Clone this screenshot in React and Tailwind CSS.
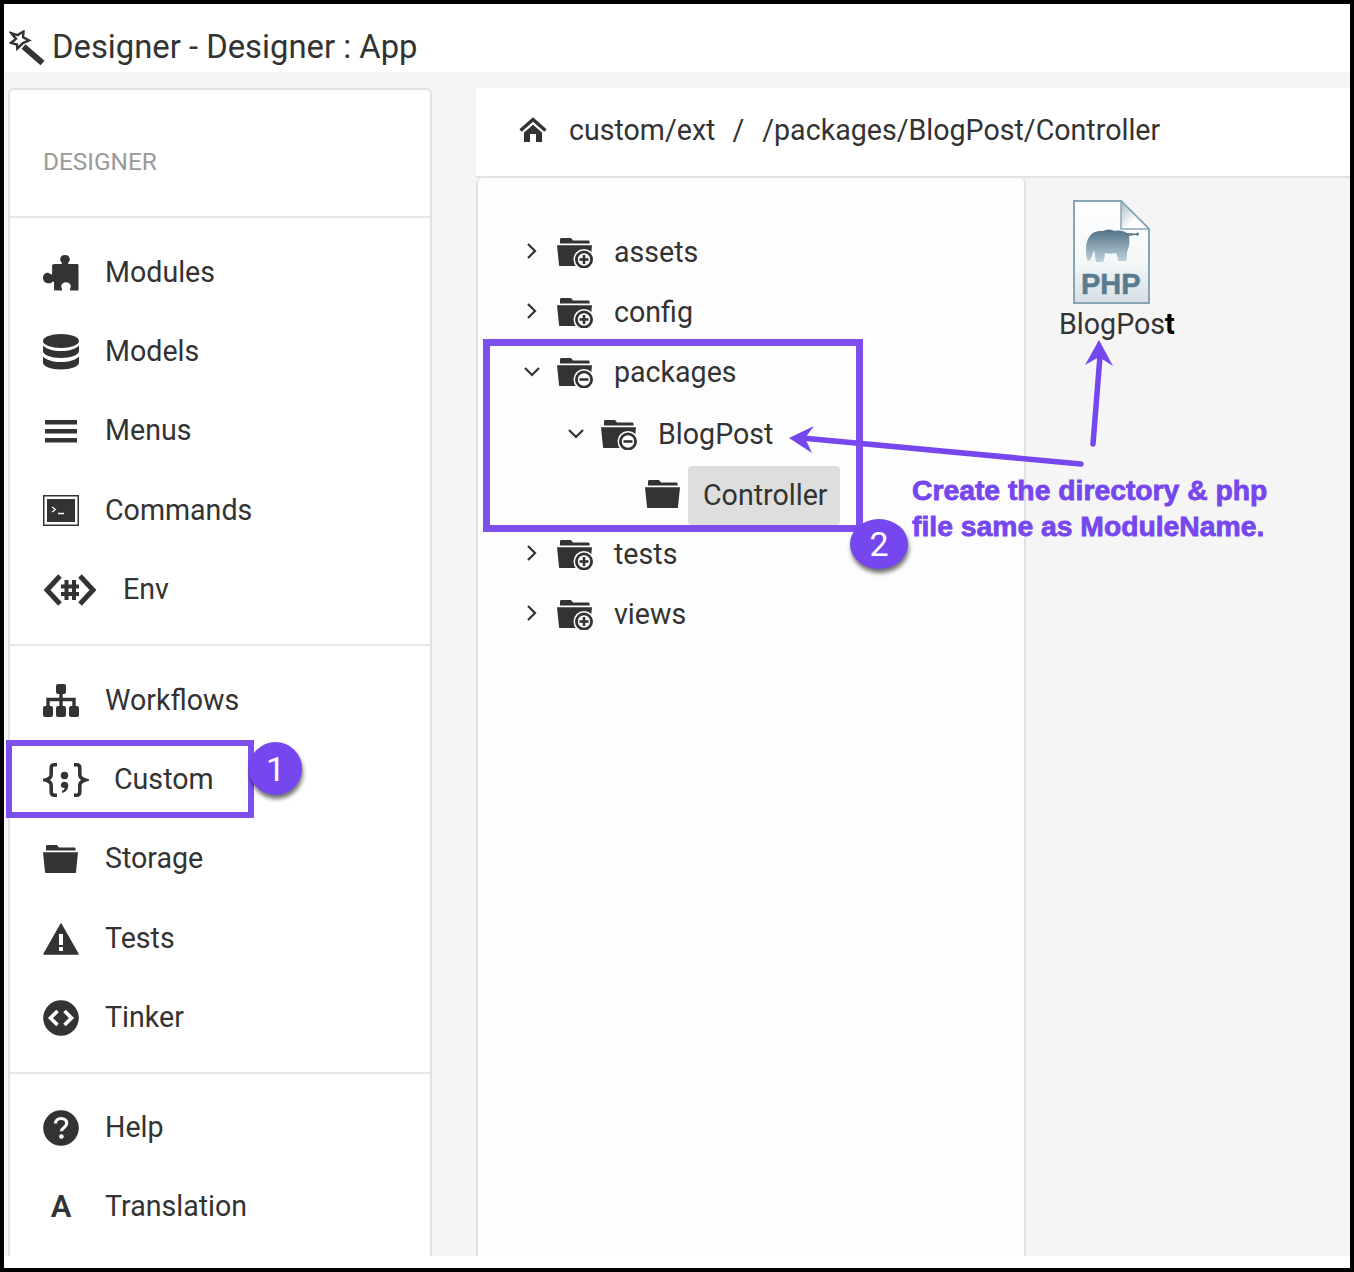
const folderTop = 'M3 6.5V2.6C3 1.500 3.600 1 4.600 1H14l2 2.400h15c1 0 1.600.5 1.600 1.500v1.600z';
const folderBody = 'M0 8.300h35l-2 19.600c-.1.800-.5 1.200-1.200 1.200H3.200c-.7 0-1.100-.4-1.200-1.200z';

function Folder({ badge }) {
  return (
    <svg width="36" height="31" viewBox="0 0 36 31" className="shrink-0" fill="#333">
      <path d={folderTop} />
      <path d={folderBody} />
      {badge && (
        <>
          <circle cx="27" cy="22.500" r="10.500" fill="#fdfdfd" />
          <circle cx="27" cy="22.500" r="7.600" fill="#fdfdfd" stroke="#333" strokeWidth="2.800" />
          <path d="M22.500 22.500h9" stroke="#333" strokeWidth="2.600" />
          {badge === 'plus' && <path d="M27 18v9" stroke="#333" strokeWidth="2.600" />}
        </>
      )}
    </svg>
  );
}

function Chevron({ open }) {
  return open ? (
    <svg width="18" height="12" viewBox="0 0 18 12" fill="none" stroke="#333" strokeWidth="2.200" className="shrink-0">
      <path d="M2 2l7 7 7-7" />
    </svg>
  ) : (
    <svg width="12" height="18" viewBox="0 0 12 18" fill="none" stroke="#333" strokeWidth="2.200" className="shrink-0 -mt-[3px]">
      <path d="M2 2l7 7-7 7" />
    </svg>
  );
}

function PuzzleIcon() {
  return (
    <svg width="36" height="36" viewBox="0 0 36 36" fill="#333">
      <path d="M12 9h6c1 0 1.200-.8.600-1.600-.8-1-1.400-1.800-1.400-3.200C17.200 1.600 19.200 0 22 0s4.800 1.600 4.800 4.200c0 1.400-.6 2.200-1.400 3.200-.6.800-.4 1.600.6 1.600h8c1 0 1.500.6 1.500 1.500V34c0 1-.5 1.500-1.500 1.500h-6c-1 0-1.400-.7-1-1.500.5-1 .8-1.700.8-2.700 0-2.400-2-4.100-4.800-4.100s-4.800 1.700-4.800 4.100c0 1 .3 1.700.8 2.700.4.800 0 1.500-1 1.500h-5.500c-1 0-1.500-.5-1.500-1.500v-6.500c0-1-.8-1.200-1.600-.6-1 .8-1.800 1.400-3.200 1.400C2 28.300 0 26 0 23s2-5.300 4.300-5.300c1.400 0 2.200.6 3.200 1.400.8.600 1.600.4 1.600-.6v-8C9.100 9.500 10.500 9 12 9z" />
    </svg>
  );
}

function DatabaseIcon() {
  return (
    <svg width="36" height="36" viewBox="0 0 36 36" fill="#333">
      <ellipse cx="18" cy="7" rx="18" ry="7" />
      <path d="M0 11.500C3 15 10 17 18 17s15-2 18-5.500V17c0 4-8 7-18 7S0 21 0 17z" />
      <path d="M0 22.500C3 26 10 28 18 28s15-2 18-5.500v6c0 4-8 7-18 7s-18-3-18-7z" />
    </svg>
  );
}

function BarsIcon() {
  return (
    <svg width="36" height="30" viewBox="0 0 36 30" fill="#333">
      <rect x="2" y="4" width="32" height="4.500" />
      <rect x="2" y="13" width="32" height="4.500" />
      <rect x="2" y="22" width="32" height="4.500" />
    </svg>
  );
}

function TerminalIcon() {
  return (
    <svg width="36" height="32" viewBox="0 0 36 32">
      <rect width="36" height="31" fill="#333" />
      <rect x="1.500" y="1.500" width="33" height="28" fill="#fff" />
      <rect x="4" y="4" width="28" height="23" fill="#333" />
      <path d="M9 12l3.500 2.500L9 17" fill="none" stroke="#fff" strokeWidth="1.200" />
      <path d="M15 18.500h6" stroke="#fff" strokeWidth="1.500" />
    </svg>
  );
}

function EnvIcon() {
  return (
    <svg width="54" height="34" viewBox="0 0 54 34" fill="none" stroke="#333">
      <path d="M17 3L4 17l13 14" strokeWidth="5" />
      <path d="M37 3l13 14-13 14" strokeWidth="5" />
      <path d="M23.500 7v20M31 7v20M18 13.500h18M18 21h18" strokeWidth="4" />
    </svg>
  );
}

function SitemapIcon() {
  return (
    <svg width="36" height="34" viewBox="0 0 36 34" fill="#333">
      <rect x="13" y="0" width="10" height="10" rx="2" />
      <rect x="0" y="22" width="10" height="11" rx="2" />
      <rect x="13" y="22" width="10" height="11" rx="2" />
      <rect x="26" y="22" width="10" height="11" rx="2" />
      <path d="M18 9v15M5 24v-8.500h26V24" fill="none" stroke="#333" strokeWidth="3.400" />
    </svg>
  );
}

function BracesIcon() {
  return (
    <svg width="46" height="34" viewBox="0 0 46 34" fill="none" stroke="#333" strokeWidth="3.600">
      <path d="M14 1.800h-2.500c-2.200 0-3.300 1-3.300 3.200v6.500c0 2.800-1.800 4.500-5.500 5.500 3.700 1 5.500 2.700 5.500 5.500V29c0 2.200 1.100 3.200 3.300 3.200H14" />
      <path d="M31 1.800h2.500c2.200 0 3.300 1 3.300 3.200v6.500c0 2.800 1.800 4.500 5.500 5.500-3.700 1-5.500 2.700-5.500 5.500V29c0 2.200-1.100 3.200-3.300 3.200H31" />
      <circle cx="21.500" cy="12.500" r="3.700" fill="#333" stroke="none" />
      <path d="M17.800 22.500c0-2.200 1.500-3.700 3.700-3.700 2.300 0 3.800 1.600 3.800 4 0 3-2 5.800-5.500 7.200l-1-1.700c1.700-.9 2.600-2 2.900-3.300-2.300 0-3.900-.8-3.900-2.500z" fill="#333" stroke="none" />
    </svg>
  );
}

function WarnIcon() {
  return (
    <svg width="36" height="32" viewBox="0 0 36 32">
      <path d="M18 1L35 31H1z" fill="#333" stroke="#333" strokeWidth="1.500" strokeLinejoin="round" />
      <rect x="16" y="11" width="4" height="11" fill="#fff" />
      <rect x="16" y="24" width="4" height="4" fill="#fff" />
    </svg>
  );
}

function CodeCircleIcon() {
  return (
    <svg width="36" height="36" viewBox="0 0 36 36">
      <circle cx="18" cy="18" r="17.800" fill="#333" />
      <path d="M14.500 11l-7 7 7 7M21.500 11l7 7-7 7" fill="none" stroke="#fff" strokeWidth="3.600" />
    </svg>
  );
}

function HelpIcon() {
  return (
    <svg width="36" height="36" viewBox="0 0 36 36">
      <circle cx="18" cy="18" r="17.800" fill="#333" />
      <path d="M12.500 13.500c0-3 2.300-5 5.500-5s5.700 2 5.700 4.800c0 4.300-5.200 4-5.200 8" fill="none" stroke="#fff" strokeWidth="3.200" />
      <circle cx="18.400" cy="26.500" r="2.300" fill="#fff" />
    </svg>
  );
}

function WandIcon() {
  return (
    <svg width="36" height="36" viewBox="0 0 36 36" fill="none" stroke="#333" className="shrink-0">
      <path d="M14.500 1.500l-.4 5.700 6 3.200-6.200 2.700-5.600 5.400-.3-4-6-1.700 5-3.900L2.300 3.200l6.300 1.900z" strokeWidth="2.400" />
      <path d="M14.500 16.500l19 16.500" strokeWidth="6" />
    </svg>
  );
}

function HomeIcon() {
  return (
    <svg width="28" height="26" viewBox="0 0 28 26" fill="#333" className="shrink-0">
      <path d="M1.500 13.500L14 2.500l12.500 11" fill="none" stroke="#333" strokeWidth="3.400" />
      <path d="M5 15.500L14 7.700l9 7.800V25h-6v-8h-6v8H5z" />
    </svg>
  );
}

function PhpFile() {
  return (
    <svg width="79" height="105" viewBox="0 0 79 105" className="ml-[13px]">
      <defs>
        <linearGradient id="page" x1="0" y1="0" x2="0" y2="1">
          <stop offset="0" stopColor="#ffffff" />
          <stop offset="0.6" stopColor="#f4f7f8" />
          <stop offset="1" stopColor="#d5dfe4" />
        </linearGradient>
        <linearGradient id="corner" x1="0" y1="0" x2="1" y2="1">
          <stop offset="0" stopColor="#a9bac3" />
          <stop offset="0.6" stopColor="#ffffff" />
        </linearGradient>
        <linearGradient id="ele" x1="0" y1="0" x2="0" y2="1">
          <stop offset="0" stopColor="#4f7186" />
          <stop offset="1" stopColor="#bfd3dd" />
        </linearGradient>
      </defs>
      <path d="M2 1h47l28 28v74H2z" fill="url(#page)" stroke="#86a6b6" strokeWidth="2" />
      <path d="M49 1v28h28z" fill="url(#corner)" stroke="#86a6b6" strokeWidth="1.500" />
      <path
        d="M15 60C13 50 14 40 18 36 21 31 27 31 31 31 35 29 39 29 43 31 47 30 52 31 55 33L64 33.500C65 32 67 32 67 34 67 36 65 36 64 35L57 36C58 42 57 48 55 52 55 56 55 59 54 61L46 61C46 57 45 55 44 53 40 54 36 54 33 53 33 56 32 60 31 62L24 62C23 57 23 53 22 50 21 54 19 58 18 61Z"
        fill="url(#ele)"
      />
      <text x="9" y="94" fontFamily="Liberation Sans" fontWeight="700" fontSize="29" fill="#587b8f" stroke="#587b8f" strokeWidth="0.500">PHP</text>
    </svg>
  );
}

function NavItem({ icon, label, textOffset = 'w-[62px]' }) {
  return (
    <div className="flex items-center h-[79.3px] pl-[33px]">
      <div className={`${textOffset} shrink-0 flex items-center`}>{icon}</div>
      <span className="-mt-px">{label}</span>
    </div>
  );
}

function TreeRow({ indent, chevron, badge, label, selected }) {
  return (
    <div className={`flex items-center h-[60px] ${indent}`}>
      <div className="w-[39px] shrink-0 flex justify-center pr-[11px]">
        {chevron === 'open' && <Chevron open />}
        {chevron === 'closed' && <Chevron />}
      </div>
      <Folder badge={badge} />
      {selected ? (
        <span className="ml-[7px] px-[15px] h-[59px] -mb-px self-end w-[152px] flex items-center bg-[#dedede] rounded-[4px]">{label}</span>
      ) : (
        <span className="ml-[21px]">{label}</span>
      )}
    </div>
  );
}

export default function App() {
  return (
    <div className="relative w-[1354px] h-[1272px] border-4 border-black bg-white text-[#333] text-[28.6px] leading-none font-['Roboto',sans-serif] overflow-hidden">
      {/* Title */}
      <div className="h-[68px] flex items-center pl-[5px] pt-[19px] text-[32.8px] gap-[7px]">
        <WandIcon />
        <span>Designer - Designer : App</span>
      </div>

      <div className="flex h-[1184px] bg-[#f5f5f5] overflow-hidden">
        {/* Sidebar */}
        <aside className="ml-[4px] mt-[16px] w-[424px] h-[1200px] shrink-0 bg-white border-2 border-[#e2e2e2] rounded-t-[6px]">
          <div className="h-[128px] border-b-2 border-[#e6e6e6] pl-[33px] pt-[60px] text-[24.4px] text-[#999]">DESIGNER</div>
          <div className="h-[428px] border-b-2 border-[#e6e6e6] pt-[15px]">
            <NavItem icon={<PuzzleIcon />} label="Modules" />
            <NavItem icon={<DatabaseIcon />} label="Models" />
            <NavItem icon={<BarsIcon />} label="Menus" />
            <NavItem icon={<TerminalIcon />} label="Commands" />
            <NavItem icon={<EnvIcon />} label="Env" textOffset="w-[80px]" />
          </div>
          <div className="h-[428px] border-b-2 border-[#e6e6e6] pt-[15px]">
            <NavItem icon={<SitemapIcon />} label="Workflows" />
            <NavItem icon={<BracesIcon />} label="Custom" textOffset="w-[71px]" />
            <NavItem icon={<Folder />} label="Storage" />
            <NavItem icon={<WarnIcon />} label="Tests" />
            <NavItem icon={<CodeCircleIcon />} label="Tinker" />
          </div>
          <div className="pt-[14px]">
            <NavItem icon={<HelpIcon />} label="Help" />
            <NavItem
              icon={<span className="w-[36px] text-center font-semibold text-[31px]">A</span>}
              label="Translation"
            />
          </div>
        </aside>

        {/* Main */}
        <main className="ml-[44px] mt-[16px] flex-1 flex flex-col min-w-0">
          <div className="h-[90px] shrink-0 bg-white border-b-2 border-[#e2e2e2] flex items-center pl-[43px] pb-[4px]">
            <HomeIcon />
            <span className="ml-[22px]">custom/ext</span>
            <span className="ml-[17px]">/</span>
            <span className="ml-[18px]">/packages/BlogPost/Controller</span>
          </div>
          <div className="flex flex-1 min-h-0">
            <div className="w-[550px] shrink-0 bg-[#fdfdfd] border-2 border-y-0 border-[#e2e2e2] rounded-t-[6px] pt-[44px]">
              <TreeRow indent="pl-[40px]" chevron="closed" badge="plus" label="assets" />
              <TreeRow indent="pl-[40px]" chevron="closed" badge="plus" label="config" />
              <TreeRow indent="pl-[40px]" chevron="open" badge="minus" label="packages" />
              <TreeRow indent="pl-[84px] mt-[2px]" chevron="open" badge="minus" label="BlogPost" />
              <TreeRow indent="pl-[128px]" label="Controller" selected />
              <TreeRow indent="pl-[40px]" chevron="closed" badge="plus" label="tests" />
              <TreeRow indent="pl-[40px]" chevron="closed" badge="plus" label="views" />
            </div>
            <div className="pl-[33px] pt-[22px]">
              <PhpFile />
              <div className="mt-[5px] whitespace-nowrap">
                BlogPos<span className="font-bold text-black">t</span>
              </div>
            </div>
          </div>
        </main>
      </div>

      {/* Annotations */}
      <div className="absolute left-[2px] top-[736px] w-[248px] h-[78px] border-[6px] border-[#7d50ee]" />
      <div className="absolute left-[479px] top-[335px] w-[380px] h-[193px] border-[7px] border-[#7d50ee]" />
      <div className="absolute left-[245px] top-[738px] w-[53px] h-[53px] rounded-full bg-[#7646ee] text-white text-[34px] flex items-center justify-center shadow-[1px_4px_4px_rgba(0,0,0,0.55)]">1</div>
      <div className="absolute left-[846px] top-[515px] w-[58px] h-[50px] rounded-[50%] bg-[#7646ee] text-white text-[34px] flex items-center justify-center shadow-[1px_4px_4px_rgba(0,0,0,0.55)]">2</div>
      <svg className="absolute -left-[4px] -top-[4px] pointer-events-none" width="1354" height="1272" fill="#7646ee">
        <path d="M1081 464L802 438" stroke="#7646ee" strokeWidth="5.500" strokeLinecap="round" />
        <path d="M789 438l25-12-9 12 7 15z" />
        <path d="M1093 444l7-88" stroke="#7646ee" strokeWidth="5.500" strokeLinecap="round" />
        <path d="M1099 340l14 26-14-9-14 8z" />
      </svg>
      <div className="absolute left-[908px] top-[469px] text-[#7646ee] font-['Liberation_Sans',sans-serif] font-bold text-[28.3px] leading-[35.5px] whitespace-nowrap [-webkit-text-stroke:0.8px_#7646ee]">
        <div>Create the directory &amp; php</div>
        <div>file same as ModuleName.</div>
      </div>
    </div>
  );
}
